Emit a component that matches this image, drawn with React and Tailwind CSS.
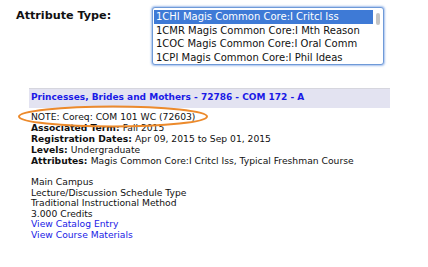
import React from "react";

const font = { fontFamily: '"DejaVu Sans", Verdana, sans-serif' };

export default function App() {
  const options = [
    "1CHI Magis Common Core:I Critcl Iss",
    "1CMR Magis Common Core:I Mth Reason",
    "1COC Magis Common Core:I Oral Comm",
    "1CPI Magis Common Core:I Phil Ideas",
  ];
  return (
    <div className="relative w-[428px] h-[267px] bg-white overflow-hidden text-[#111]" style={font}>
      <div className="flex pt-[7px]">
        <div className="w-[152px] pl-[16px] pt-[2px] text-[11.2px] font-bold leading-[14px]">Attribute Type:</div>
        <div className="relative w-[232px] h-[58px] border border-[#6f9ad8] rounded-[3px] shadow-[0_0_2px_1px_rgba(90,140,220,0.55)] bg-white pt-[2px] pl-[1px]">
          {options.map((o, i) => (
            <div
              key={o}
              className={
                "h-[13.7px] leading-[13.7px] text-[10px] pl-[2px] mr-[10px] whitespace-nowrap " +
                (i === 0 ? "bg-[#3e7ad6] text-white" : "")
              }
            >
              {o}
            </div>
          ))}
          <div className="absolute right-[3px] top-[5px] w-[4px] h-[12px] rounded-full bg-[#c4c4c4]" />
        </div>
      </div>

      <div className="ml-[29px] mt-[23px] w-[361px]">
        <div className="h-[20px] bg-[#e3e3f1] border-t border-[#d6d6de] pl-[2px] pt-[1px] text-[9px] font-bold leading-[14px] text-[#1a1ae6]">
          Princesses, Brides and Mothers - 72786 - COM 172 - A
        </div>
        <div className="pl-[2px] pt-[3px] text-[9.2px] leading-[11px]">
          <div>NOTE: Coreq: COM 101 WC (72603)</div>
          <div><span className="font-bold">Associated Term: </span>Fall 2015</div>
          <div><span className="font-bold">Registration Dates: </span>Apr 09, 2015 to Sep 01, 2015</div>
          <div><span className="font-bold">Levels: </span>Undergraduate</div>
          <div><span className="font-bold">Attributes: </span>Magis Common Core:I Critcl Iss, Typical Freshman Course</div>
          <div className="h-[11px]" />
          <div className="leading-[10.6px]">
            <div>Main Campus</div>
            <div>Lecture/Discussion Schedule Type</div>
            <div>Traditional Instructional Method</div>
            <div>3.000 Credits</div>
            <div className="text-[#1a1ae6]">View Catalog Entry</div>
            <div className="text-[#1a1ae6]">View Course Materials</div>
          </div>
        </div>
      </div>

      <svg className="absolute left-0 top-0 pointer-events-none" width="428" height="267">
        <ellipse cx="113" cy="116.5" rx="94" ry="10" fill="none" stroke="#ec8a2c" strokeWidth="2" />
      </svg>
    </div>
  );
}
